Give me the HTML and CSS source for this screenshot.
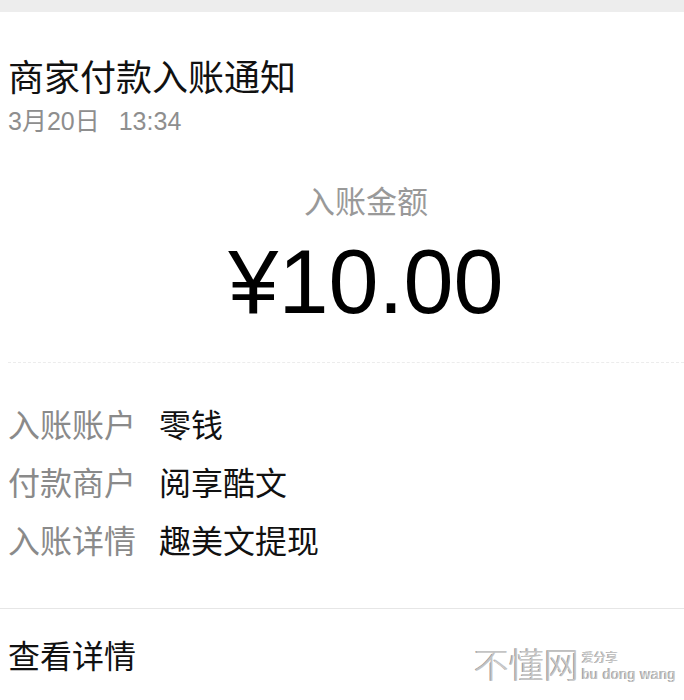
FILE: index.html
```html
<!DOCTYPE html>
<html lang="zh-CN">
<head>
<meta charset="utf-8">
<title>商家付款入账通知</title>
<link rel="stylesheet" href="styles.css">
</head>
<body>
<div class="topbar"></div>
<main class="card">
  <header class="head">
    <h1 class="title">商家付款入账通知</h1>
    <div class="date"><span>3月20日</span><span class="time">13:34</span></div>
  </header>
  <section class="amount">
    <div class="amount-label">入账金额</div>
    <div class="amount-value">¥10.00</div>
  </section>
  <div class="dash"></div>
  <section class="rows">
    <div class="row"><span class="k">入账账户</span><span class="v">零钱</span></div>
    <div class="row"><span class="k">付款商户</span><span class="v">阅享酷文</span></div>
    <div class="row"><span class="k">入账详情</span><span class="v">趣美文提现</span></div>
  </section>
  <div class="divider"></div>
  <div class="more">查看详情</div>
</main>
<div class="watermark">
  <span class="wm-big">不懂网</span>
  <span class="wm-side"><span class="wm-top">爱分享</span><span class="wm-bottom">bu dong wang</span></span>
</div>
</body>
</html>
```
FILE: styles.css
```css
html, body {
  margin: 0;
  padding: 0;
  background: #fff;
}
body {
  font-family: "Noto Sans CJK SC", "Noto Sans", sans-serif;
  color: #111;
  width: 684px;
  height: 700px;
  overflow: hidden;
  position: relative;
}
.topbar {
  height: 12px;
  background: #ededed;
}
.card {
  display: flex;
  flex-direction: column;
}
.head {
  padding: 0 8px;
}
.title {
  margin: 41px 0 0;
  font-size: 36px;
  font-weight: 400;
  line-height: 44px;
  color: #111;
}
.date {
  margin-top: 9px;
  font-family: "Liberation Sans", "Noto Sans CJK SC", sans-serif;
  font-size: 25px;
  line-height: 30px;
  color: #8e8e8e;
  display: flex;
  gap: 19px;
}
.amount {
  display: flex;
  flex-direction: column;
  align-items: center;
  padding-left: 48px;
}
.amount-label {
  margin-top: 44px;
  font-size: 31px;
  line-height: 40px;
  color: #999;
}
.amount-value {
  margin-top: 12px;
  font-family: "Liberation Sans", "Noto Sans", sans-serif;
  font-size: 90px;
  line-height: 100px;
  color: #000;
}
.dash {
  margin: 30px 0 0 8px;
  border-top: 1px dashed #ececec;
}
.rows {
  padding: 31px 8px 0;
  display: flex;
  flex-direction: column;
}
.row {
  display: flex;
  font-size: 32px;
  line-height: 58px;
}
.k {
  width: 151px;
  color: #8a8a8a;
}
.v {
  color: #111;
}
.divider {
  margin-top: 40px;
  border-top: 1px solid #e6e6e6;
}
.more {
  padding: 22px 8px 0;
  font-size: 32px;
  line-height: 46px;
  color: #111;
}
.watermark {
  position: absolute;
  left: 474px;
  top: 641px;
  width: max-content;
  white-space: nowrap;
  display: flex;
  align-items: flex-end;
  color: #c4c4c4;
  text-shadow: 1px 1px 0 #fff, -1px 0 0 #9a9a9a;
}
.wm-big {
  font-size: 35px;
  line-height: 44px;
  font-family: "Noto Sans CJK SC", sans-serif;
  font-weight: 300;
}
.wm-side {
  display: flex;
  flex-direction: column;
  margin-left: 3px;
  margin-bottom: 2px;
}
.wm-top {
  font-size: 12px;
  line-height: 16px;
}
.wm-bottom {
  font-family: "Liberation Sans", sans-serif;
  font-size: 14px;
  line-height: 18px;
  letter-spacing: 0.5px;
}
```
